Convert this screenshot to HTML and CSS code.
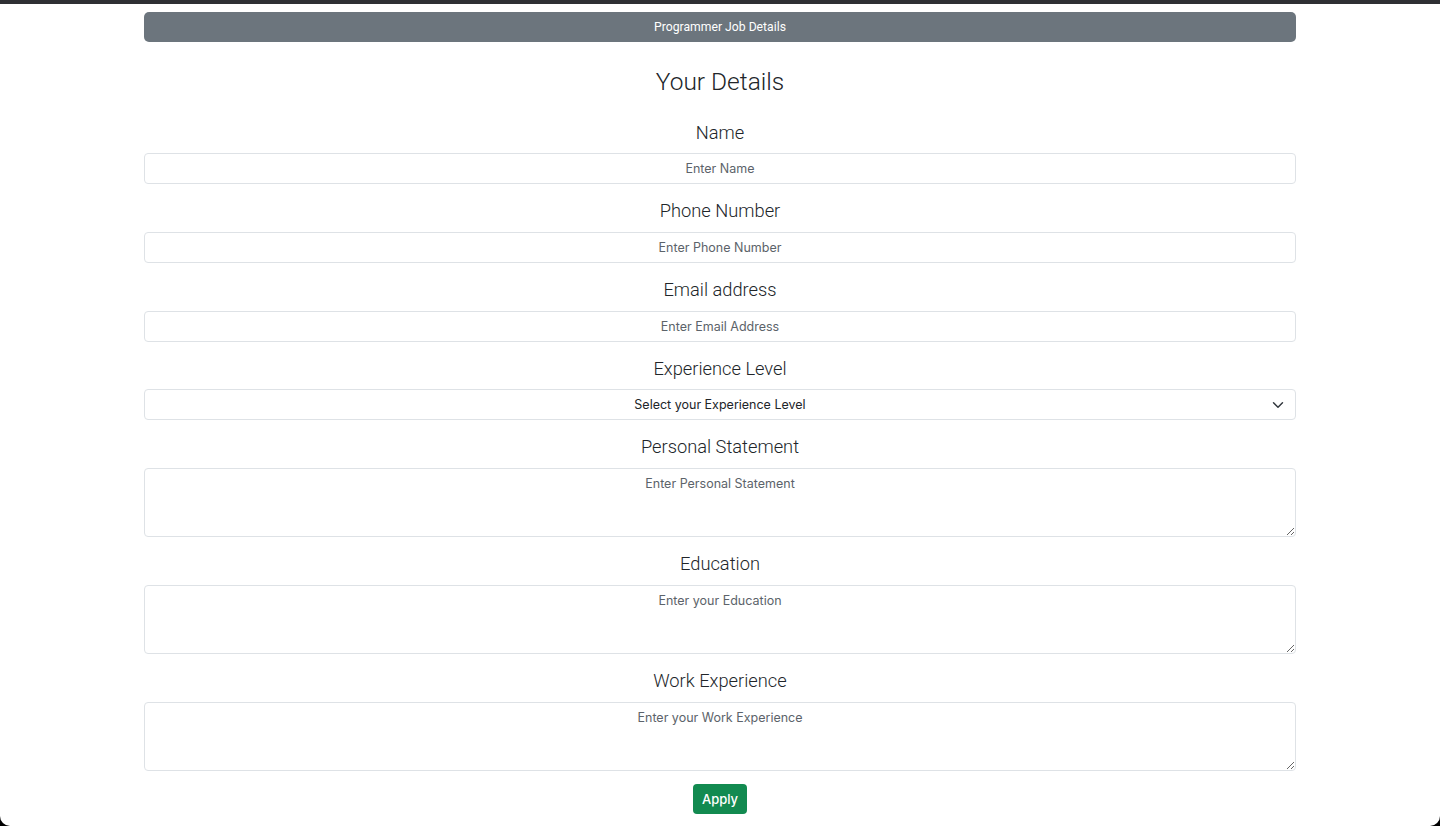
FILE: index.html
```html
<!DOCTYPE html>
<html lang="en">
<head>
<meta charset="utf-8">
<title>Programmer Job Details</title>
<link rel="stylesheet" href="styles.css">
</head>
<body>
<div class="window">
  <div class="container">
    <div class="topbar">Programmer Job Details</div>
    <h2 class="title">Your Details</h2>
    <form class="form">
      <div class="field">
        <label class="label" for="name">Name</label>
        <input class="control" id="name" type="text" placeholder="Enter Name">
      </div>
      <div class="field">
        <label class="label" for="phone">Phone Number</label>
        <input class="control" id="phone" type="text" placeholder="Enter Phone Number">
      </div>
      <div class="field">
        <label class="label" for="email">Email address</label>
        <input class="control" id="email" type="email" placeholder="Enter Email Address">
      </div>
      <div class="field">
        <label class="label" for="level">Experience Level</label>
        <select class="control select" id="level">
          <option>Select your Experience Level</option>
        </select>
      </div>
      <div class="field">
        <label class="label" for="statement">Personal Statement</label>
        <textarea class="control area" id="statement" placeholder="Enter Personal Statement"></textarea>
      </div>
      <div class="field">
        <label class="label" for="education">Education</label>
        <textarea class="control area" id="education" placeholder="Enter your Education"></textarea>
      </div>
      <div class="field">
        <label class="label" for="work">Work Experience</label>
        <textarea class="control area" id="work" placeholder="Enter your Work Experience"></textarea>
      </div>
      <div class="actions">
        <button class="btn" type="button">Apply</button>
      </div>
    </form>
  </div>
</div>
</body>
</html>
```

FILE: styles.css
```css
html, body {
  margin: 0;
  padding: 0;
  background: #000;
}

.window {
  box-sizing: border-box;
  height: 826px;
  background: #fff;
  border-top: 4px solid #2e2f33;
  border-radius: 0 0 10px 10px;
  overflow: hidden;
  font-family: Roboto, "Liberation Sans", sans-serif;
  color: #212529;
}

.container {
  width: 1152px;
  margin: 0 auto;
  padding-top: 8px;
}

.topbar {
  height: 30px;
  background: #6c757d;
  border-radius: 5px;
  color: #fff;
  font-size: 12.2px;
  display: flex;
  align-items: center;
  justify-content: center;
}

.title {
  margin: 25px 0 0;
  font-size: 24.5px;
  line-height: 29px;
  font-weight: 300;
  text-align: center;
}

.form {
  display: flex;
  flex-direction: column;
}

.field {
  display: flex;
  flex-direction: column;
}

.label {
  margin-top: 16px;
  margin-bottom: 9.7px;
  font-size: 18.3px;
  line-height: 22px;
  font-weight: 300;
  text-align: center;
}

.field:first-child .label {
  margin-top: 25.7px;
}

.control {
  box-sizing: border-box;
  width: 100%;
  height: 31px;
  margin: 0;
  padding: 4px 8px;
  border: 1px solid #dee2e6;
  border-radius: 4px;
  background: #fff;
  font-family: Inter, "Liberation Sans", sans-serif;
  font-size: 12.5px;
  color: #212529;
  text-align: center;
  outline: none;
}

.control::placeholder {
  color: #5c636a;
  opacity: 1;
}

.select {
  appearance: none;
  -webkit-appearance: none;
  text-align-last: center;
  font-weight: 400;
  color: #212529;
  background-image: url("data:image/svg+xml,%3csvg xmlns='http://www.w3.org/2000/svg' viewBox='0 0 16 16'%3e%3cpath fill='none' stroke='%23343a40' stroke-linecap='round' stroke-linejoin='round' stroke-width='2' d='m2 5 6 6 6-6'/%3e%3c/svg%3e");
  background-repeat: no-repeat;
  background-position: right 11px center;
  background-size: 12px 12px;
}

.area {
  height: 69px;
  padding-top: 7px;
  resize: vertical;
  display: block;
}

.actions {
  display: flex;
  justify-content: center;
  margin-top: 13.4px;
}

.btn {
  height: 30px;
  width: 54px;
  padding: 0;
  border: none;
  border-radius: 4px;
  background: #128a50;
  color: #fff;
  font-family: Inter, "Liberation Sans", sans-serif;
  font-size: 13px;
  font-weight: 500;
  cursor: pointer;
}
```
